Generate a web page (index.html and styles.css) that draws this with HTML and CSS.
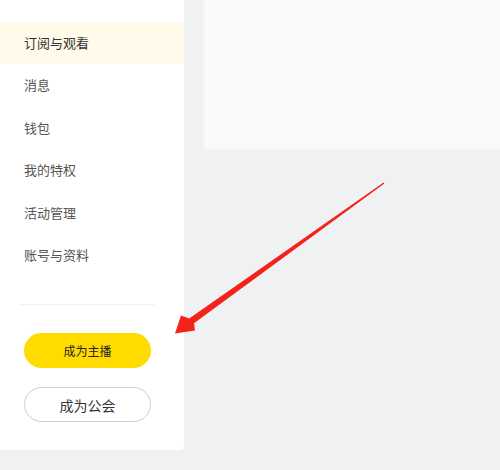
FILE: index.html
```html
<!DOCTYPE html>
<html lang="zh-CN">
<head>
<meta charset="utf-8">
<title>订阅与观看</title>
<link rel="stylesheet" href="styles.css">
</head>
<body>
<div class="page">
  <aside class="sidebar">
    <nav class="menu">
      <div class="item active">订阅与观看</div>
      <div class="item">消息</div>
      <div class="item">钱包</div>
      <div class="item">我的特权</div>
      <div class="item">活动管理</div>
      <div class="item">账号与资料</div>
    </nav>
    <div class="divider"></div>
    <div class="actions">
      <button class="btn btn-primary">成为主播</button>
      <button class="btn btn-outline">成为公会</button>
    </div>
  </aside>
  <main class="main">
    <div class="panel"></div>
  </main>
</div>
<svg class="arrow" width="500" height="470" viewBox="0 0 500 470">
  <polygon fill="#f5221b" points="383.6,182.4 384.4,183.6 194,323.2 195,330.5 175,333.5 181,315.5 189.2,318.6"/>
</svg>
</body>
</html>
```

FILE: styles.css
```css
html, body {
  margin: 0;
  padding: 0;
}
body {
  background: #f0f1f3;
  font-family: "Noto Sans CJK SC", "Noto Sans", sans-serif;
  width: 500px;
  height: 470px;
  overflow: hidden;
  position: relative;
}
.page {
  display: flex;
  align-items: flex-start;
}
.sidebar {
  width: 184px;
  height: 450px;
  background: #ffffff;
  border-bottom-right-radius: 4px;
  box-sizing: border-box;
  padding-top: 22px;
  display: flex;
  flex-direction: column;
}
.menu {
  display: flex;
  flex-direction: column;
}
.item {
  height: 42.4px;
  line-height: 42.4px;
  padding-left: 24px;
  font-size: 13px;
  color: #555555;
}
.item.active {
  background: #fffaea;
  color: #333333;
}
.divider {
  height: 1px;
  background: #f1f1f1;
  margin: 28px 29px 0 20px;
}
.actions {
  display: flex;
  flex-direction: column;
  gap: 19px;
  padding: 28px 0 0 24px;
}
.btn {
  width: 127px;
  height: 35px;
  border-radius: 18px;
  font-family: "Noto Sans CJK SC", "Noto Sans", sans-serif;
  cursor: pointer;
  padding: 0;
}
.btn-primary {
  background: #ffdb00;
  border: none;
  color: #222222;
  font-size: 12px;
}
.btn-outline {
  background: #ffffff;
  border: 1px solid #cfcfcf;
  color: #333333;
  font-size: 14px;
}
.main {
  flex: 1;
  padding-left: 19px;
}
.panel {
  height: 150px;
  background: #f8f9fb;
  border-left: 1px solid #f3f4f6;
  border-bottom: 1px solid #f3f4f6;
  box-sizing: border-box;
}
.arrow {
  position: absolute;
  left: 0;
  top: 0;
  pointer-events: none;
}
```
